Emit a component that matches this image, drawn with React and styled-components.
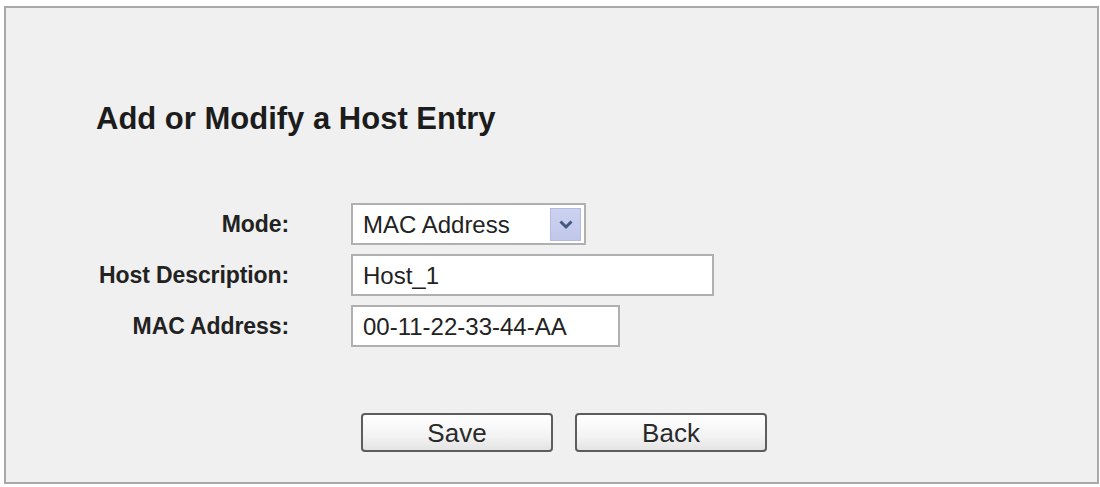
import styled, { createGlobalStyle } from 'styled-components';

const GlobalStyle = createGlobalStyle`
  html, body {
    margin: 0;
    padding: 0;
    background: #ffffff;
  }
  body {
    font-family: "Liberation Sans", Arial, sans-serif;
  }
`;

const Page = styled.div`
  width: 1100px;
  height: 487px;
  padding: 6px 1px 3px 4px;
  box-sizing: border-box;
`;

const Panel = styled.div`
  height: 100%;
  box-sizing: border-box;
  border: 2px solid #a9a9a9;
  background: #f0f0f0;
  padding: 93px 0 0 90px;
`;

const Title = styled.h2`
  margin: 0;
  font-size: 31px;
  font-weight: bold;
  color: #1c1c1c;
`;

const Form = styled.div`
  margin-top: 66px;
  display: grid;
  grid-template-columns: 193px auto;
  column-gap: 62px;
  row-gap: 9px;
  align-items: center;
`;

const Label = styled.div`
  text-align: right;
  font-size: 23px;
  font-weight: bold;
  color: #222;
  letter-spacing: -0.1px;
  white-space: nowrap;
`;

const Field = styled.input`
  width: ${({ $width }) => $width}px;
  height: 42px;
  box-sizing: border-box;
  border: 2px solid #b0b0b0;
  background: #fff;
  padding: 2px 0 0 10px;
  font-family: "Liberation Sans", Arial, sans-serif;
  font-size: 24px;
  color: #222;
  outline: none;
`;

const Select = styled.div`
  width: 235px;
  height: 42px;
  box-sizing: border-box;
  border: 2px solid #b0b0b0;
  background: #fff;
  display: flex;
  align-items: center;
  justify-content: space-between;
  padding: 2px 3px 0 10px;
  font-size: 24px;
  color: #222;
`;

const Arrow = styled.span`
  width: 31px;
  height: 33px;
  margin-top: -2px;
  background: linear-gradient(#ccd2f0, #c0c7ea);
  border: 1px solid #b3bbdf;
  box-sizing: border-box;
  display: flex;
  align-items: center;
  justify-content: center;
`;

const Buttons = styled.div`
  margin: 66px 0 0 265px;
  display: flex;
  gap: 22px;
`;

const Button = styled.button`
  width: 192px;
  height: 39px;
  box-sizing: border-box;
  border: 2px solid #5d5d5d;
  border-radius: 4px;
  background: linear-gradient(#ffffff, #f3f3f3 60%, #e4e4e4);
  font-family: "Liberation Sans", Arial, sans-serif;
  font-size: 26px;
  color: #2a2a2a;
  padding: 0;
  line-height: 1;
`;

export default function App() {
  return (
    <Page>
      <GlobalStyle />
      <Panel>
        <Title>Add or Modify a Host Entry</Title>
        <Form>
          <Label>Mode:</Label>
          <Select>
            MAC Address
            <Arrow>
              <svg width="16" height="11" viewBox="0 0 16 11">
                <path d="M2.5 2.5 L8 8 L13.5 2.5" fill="none" stroke="#45587f" strokeWidth="3" />
              </svg>
            </Arrow>
          </Select>
          <Label>Host Description:</Label>
          <Field $width={363} defaultValue="Host_1" />
          <Label>MAC Address:</Label>
          <Field $width={269} defaultValue="00-11-22-33-44-AA" />
        </Form>
        <Buttons>
          <Button>Save</Button>
          <Button>Back</Button>
        </Buttons>
      </Panel>
    </Page>
  );
}
